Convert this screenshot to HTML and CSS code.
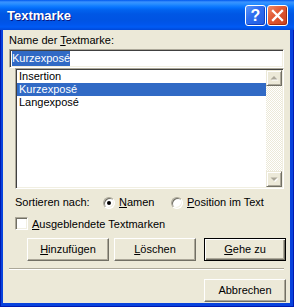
FILE: index.html
```html
<!DOCTYPE html>
<html>
<head>
<meta charset="utf-8">
<title>Textmarke</title>
<link rel="stylesheet" href="styles.css">
</head>
<body>
<div class="window">
  <div class="titlebar">
    <span class="title">Textmarke</span>
    <span class="cap-btn help">?</span>
    <span class="cap-btn close"><svg width="19" height="19" viewBox="0 0 19 19"><path d="M5 5 L14 14 M14 5 L5 14" stroke="#fff" stroke-width="2.3" stroke-linecap="square"/></svg></span>
  </div>
  <div class="client">
    <div class="label">Name der <u>T</u>extmarke:</div>
    <div class="edit"><span class="sel">Kurzexposé</span></div>
    <div class="list">
      <div class="items">
        <div class="item">Insertion</div>
        <div class="item selected">Kurzexposé</div>
        <div class="item">Langexposé</div>
      </div>
      <div class="scrollbar">
        <div class="sbtn"><svg width="12" height="12" viewBox="0 0 12 12"><path d="M3.5 8.5 H10.5 L7 5 Z" fill="#fff"/><path d="M2.5 7.5 H9.5 L6 4 Z" fill="#aca899"/></svg></div>
        <div class="track"></div>
        <div class="sbtn"><svg width="12" height="12" viewBox="0 0 12 12"><path d="M3.5 5.5 H10.5 L7 9 Z" fill="#fff"/><path d="M2.5 4.5 H9.5 L6 8 Z" fill="#aca899"/></svg></div>
      </div>
    </div>
    <div class="sort-row">
      <span class="sort-label">Sortieren nach:</span>
      <span class="opt first"><span class="radio checked"></span><span><u>N</u>amen</span></span>
      <span class="opt"><span class="radio"></span><span><u>P</u>osition im Text</span></span>
    </div>
    <div class="check-row">
      <span class="checkbox"></span><span><u>A</u>usgeblendete Textmarken</span>
    </div>
    <div class="btn-row">
      <span class="btn"><u>H</u>inzufügen</span>
      <span class="btn"><u>L</u>öschen</span>
      <span class="btn default"><u>G</u>ehe zu</span>
    </div>
    <div class="sep"></div>
    <div class="btn-row last">
      <span class="btn">Abbrechen</span>
    </div>
  </div>
</div>
</body>
</html>
```
FILE: styles.css
```css
html, body {
  margin: 0;
  padding: 0;
}
body {
  width: 294px;
  height: 307px;
  overflow: hidden;
  font-family: "Liberation Sans", Arial, sans-serif;
  font-size: 11px;
  color: #000;
}
u { text-decoration: underline; text-underline-offset: 1px; }

.window {
  box-sizing: border-box;
  width: 294px;
  height: 307px;
  display: flex;
  flex-direction: column;
  background: #0842dd;
  padding: 0 4px 4px 3px;
  box-shadow: inset 1px 0 0 #0019b0, inset -1px 0 0 #0019b0, inset 0 -1px 0 #0019b0;
}

.titlebar {
  height: 30px;
  margin: 0 -4px 0 -3px;
  display: flex;
  align-items: flex-start;
  padding: 5px 6px 0 7px;
  box-sizing: border-box;
  background: linear-gradient(to bottom,
    #0058ee 0px, #3a93ff 2px, #288eff 4px, #127dff 6px, #036ffc 8px,
    #0262ee 10px, #0057e5 14px, #0054e3 20px, #0055eb 24px, #005bf5 27px, #0048d8 30px);
}
.title {
  flex: 1;
  margin-top: 4px;
  color: #fff;
  font-weight: bold;
  font-size: 13px;
  line-height: 13px;
  text-shadow: 1px 1px 0 #0a1883;
}
.cap-btn {
  box-sizing: border-box;
  width: 21px;
  height: 21px;
  border: 1px solid #fff;
  border-radius: 3px;
  display: flex;
  align-items: center;
  justify-content: center;
}
.help {
  margin-right: 1px;
  background: linear-gradient(135deg, #5d95f8 0%, #2f6ef0 40%, #1f5ae0 100%);
  box-shadow: inset -1px -1px 0 #1241c2;
  color: #fff;
  font-weight: bold;
  font-size: 16px;
  line-height: 19px;
}
.close {
  background: linear-gradient(135deg, #ee8a66 0%, #e25b36 40%, #c8401c 100%);
  box-shadow: inset -1px -1px 0 #a82e10;
}
.close svg { display: block; }

.client {
  flex: 1;
  background: #ece9d8;
  padding: 4px 4px 0 6px;
}
.label {
  line-height: 13px;
  height: 13px;
}
.edit {
  box-sizing: border-box;
  margin-top: 2px;
  width: 275px;
  height: 19px;
  background: #fff;
  border: 1px solid;
  border-color: #aca899 #fff #fff #aca899;
  box-shadow: inset 1px 1px 0 #404040, inset -1px -1px 0 #f1efe2;
  padding: 1px 0 0 2px;
}
.sel {
  display: inline-block;
  background: #316ac5;
  color: #fff;
  line-height: 15px;
  height: 15px;
  vertical-align: top;
}
.list {
  box-sizing: border-box;
  margin-left: 6px;
  width: 269px;
  height: 121px;
  display: flex;
  background: #fff;
  border: 1px solid;
  border-color: #aca899 #fff #fff #aca899;
  box-shadow: inset 1px 1px 0 #404040, inset -1px -1px 0 #f1efe2;
  padding: 1px;
}
.items {
  flex: 1;
}
.item {
  line-height: 13px;
  height: 13px;
  padding-left: 2px;
}
.item.selected {
  background: #316ac5;
  color: #fff;
}
.scrollbar {
  width: 16px;
  display: flex;
  flex-direction: column;
}
.track {
  flex: 1;
  background: repeating-conic-gradient(#fff 0 25%, #ece9d8 0 50%) 0 0 / 2px 2px;
}
.sbtn {
  box-sizing: border-box;
  width: 16px;
  height: 16px;
  background: #ece9d8;
  border: 1px solid;
  border-color: #ece9d8 #716f64 #716f64 #ece9d8;
  box-shadow: inset 1px 1px 0 #fff, inset -1px -1px 0 #aca899;
  display: flex;
  align-items: center;
  justify-content: center;
}
.sbtn svg { display: block; }

.sort-row {
  margin-top: 7px;
  display: flex;
  align-items: center;
  height: 13px;
  line-height: 13px;
  padding-left: 6px;
}
.sort-label {
  width: 88px;
}
.opt {
  display: flex;
  align-items: center;
  gap: 4px;
}
.opt.first {
  width: 68px;
}
.radio {
  box-sizing: border-box;
  width: 12px;
  height: 12px;
  border-radius: 50%;
  background: #fff;
  border: 1px solid;
  border-color: #aca899 #fff #fff #aca899;
  box-shadow: inset 1px 1px 0 #716f64, inset -1px -1px 0 #f1efe2;
  display: flex;
  align-items: center;
  justify-content: center;
}
.radio.checked::after {
  content: "";
  width: 4px;
  height: 4px;
  border-radius: 50%;
  background: #000;
}
.check-row {
  margin-top: 8px;
  display: flex;
  align-items: center;
  gap: 4px;
  height: 13px;
  line-height: 14px;
  padding-left: 6px;
}
.checkbox {
  box-sizing: border-box;
  width: 13px;
  height: 13px;
  background: #fff;
  border: 1px solid;
  border-color: #aca899 #fff #fff #aca899;
  box-shadow: inset 1px 1px 0 #716f64, inset -1px -1px 0 #f1efe2;
}
.btn-row {
  margin-top: 8px;
  display: flex;
  justify-content: flex-end;
  gap: 5px;
}
.btn-row .btn.default {
  margin-left: 3px;
}
.btn {
  box-sizing: border-box;
  width: 82px;
  height: 23px;
  background: #ece9d8;
  border: 1px solid;
  border-color: #fff #716f64 #716f64 #fff;
  box-shadow: inset -1px -1px 0 #aca899;
  display: flex;
  align-items: center;
  justify-content: center;
  line-height: 13px;
}
.btn.default {
  border: 1px solid #000;
  box-shadow: inset 1px 1px 0 #fff, inset -1px -1px 0 #716f64, inset -2px -2px 0 #aca899;
}
.sep {
  margin-top: 7px;
  width: 275px;
  height: 1px;
  background: #aca899;
  border-bottom: 1px solid #fff;
}
.btn-row.last {
  margin-top: 9px;
}
```
